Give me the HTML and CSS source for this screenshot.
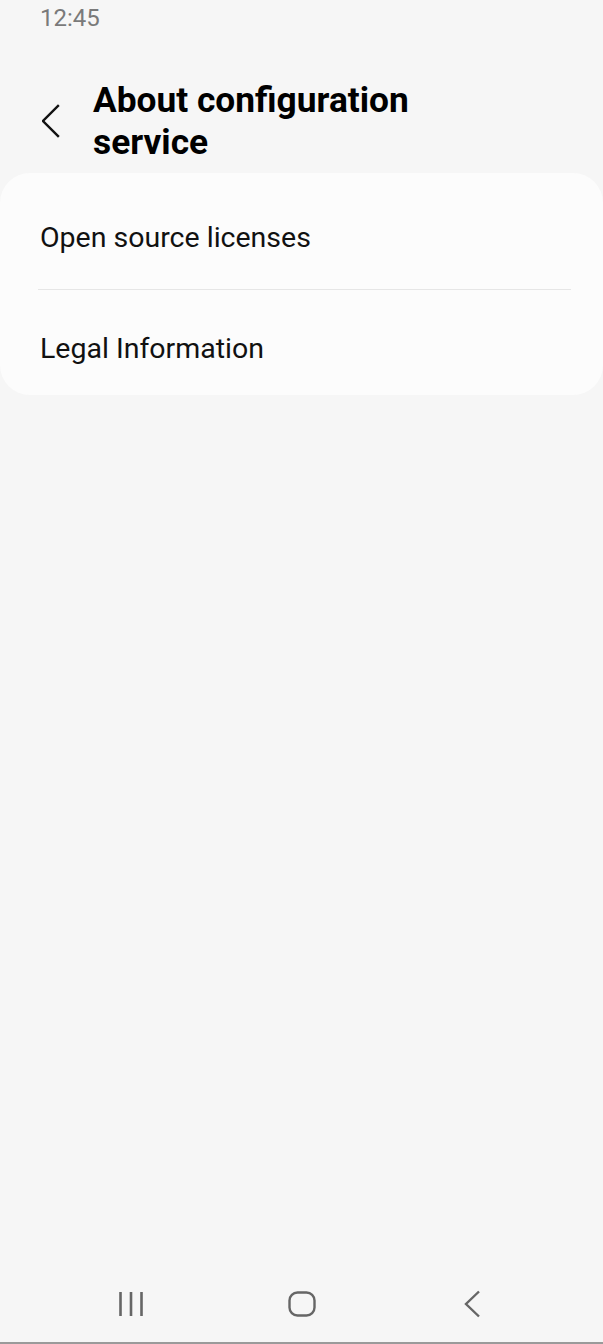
FILE: index.html
```html
<!DOCTYPE html>
<html>
<head>
<meta charset="utf-8">
<link rel="stylesheet" href="styles.css">
</head>
<body>
<div class="screen">
  <div class="status">12:45</div>
  <header class="appbar">
    <div class="back">
      <svg width="30" height="34" viewBox="0 0 30 34"><path d="M16 2 L1 17 L16 32" fill="none" stroke="#111" stroke-width="2.4" stroke-linecap="square"/></svg>
    </div>
    <h1 class="title">About configuration<br>service</h1>
  </header>
  <section class="card">
    <div class="item item-first">Open source licenses</div>
    <div class="divider"></div>
    <div class="item item-last">Legal Information</div>
  </section>
  <div class="spacer"></div>
  <nav class="navbar">
    <svg class="nav-icon" width="24" height="26" viewBox="0 0 24 26"><path d="M1.5 1 V25 M12 1 V25 M22.5 1 V25" stroke="#666" stroke-width="2.6" fill="none"/></svg>
    <svg class="nav-icon" width="28" height="26" viewBox="0 0 28 26"><rect x="1.5" y="1.5" width="25" height="23" rx="8" fill="none" stroke="#666" stroke-width="2.4"/></svg>
    <svg class="nav-icon nav-back" width="20" height="28" viewBox="0 0 20 28"><path d="M16 1.5 L3 14 L16 26.5" fill="none" stroke="#666" stroke-width="2.4"/></svg>
  </nav>
</div>
</body>
</html>
```
FILE: styles.css
```css
html, body {
  margin: 0;
  padding: 0;
  background: #f6f6f6;
}
.screen {
  width: 603px;
  height: 1344px;
  display: flex;
  flex-direction: column;
  font-family: Roboto, "Noto Sans", sans-serif;
  background: #f6f6f6;
  border-bottom: 2px solid #9a9a9a;
  box-sizing: border-box;
}
.status {
  height: 36px;
  padding-left: 40px;
  font-size: 24px;
  line-height: 36px;
  color: #7a7a7a;
}
.appbar {
  display: flex;
  align-items: center;
  box-sizing: border-box;
  padding: 43px 0 10px 42px;
}
.back {
  width: 51px;
  display: flex;
  align-items: center;
}
.title {
  margin: 0;
  font-size: 35.3px;
  font-weight: 700;
  line-height: 42px;
  color: #000;
}
.card {
  background: #fcfcfc;
  border-radius: 30px;
  padding: 0 32px 0 38px;
}
.item {
  padding-left: 2px;
  font-size: 28.5px;
  line-height: 36px;
  color: #111;
}
.item-first {
  padding-top: 47px;
  padding-bottom: 33px;
}
.item-last {
  padding-top: 41px;
  padding-bottom: 28px;
}
.divider {
  height: 1px;
  background: #e6e6e6;
}
.spacer {
  flex: 1;
}
.navbar {
  height: 78px;
  display: grid;
  grid-template-columns: repeat(3, 171px);
  justify-items: center;
  align-items: start;
  padding: 0 45px;
  box-sizing: border-box;
}
.nav-icon {
  margin-top: 27px;
}
.nav-back {
  margin-top: 26px;
}
```
